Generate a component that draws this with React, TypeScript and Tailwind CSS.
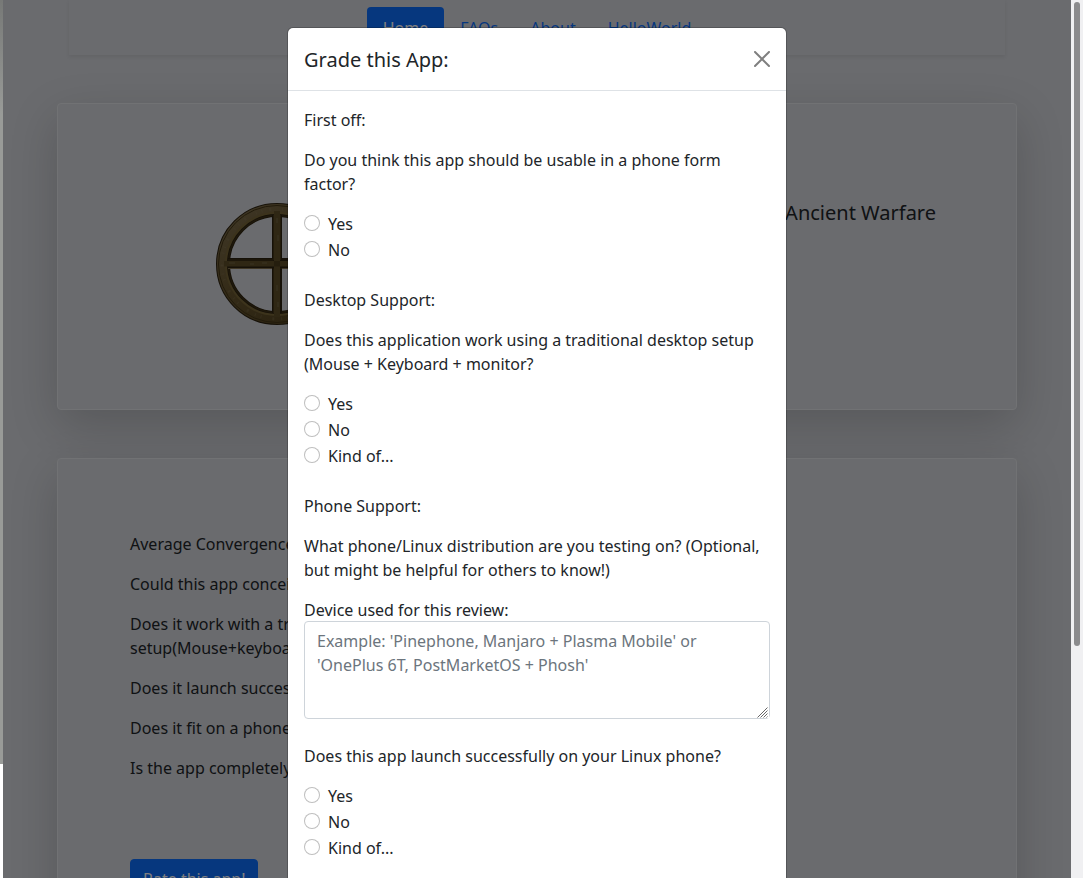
import React from 'react';

interface ChoiceGroupProps {
    name: string;
    question: string;
    options: string[];
}

function ChoiceGroup({ name, question, options }: ChoiceGroupProps) {
    return (
        <fieldset className="mb-6">
            <legend className="mb-4">{question}</legend>
            {options.map((option) => {
                const id = `${name}-${option.replace(/\W/g, '').toLowerCase()}`;
                return (
                    <div key={id} className="flex items-start gap-2 mb-0.5">
                        <input
                            id={id}
                            type="radio"
                            name={name}
                            value={option}
                            className="appearance-none shrink-0 size-4 mt-[3px] rounded-full border border-black/25 bg-white checked:border-5 checked:border-[#0d6efd]"
                        />
                        <label htmlFor={id}>{option}</label>
                    </div>
                );
            })}
        </fieldset>
    );
}

function WheelLogo() {
    return (
        <svg className="size-[122px]" viewBox="0 0 122 122" fill="none" aria-hidden="true">
            <defs>
                <linearGradient id="bronze" x1="0" y1="0" x2="0.8" y2="1">
                    <stop offset="0" stopColor="#80704e" />
                    <stop offset="0.5" stopColor="#68562f" />
                    <stop offset="1" stopColor="#544420" />
                </linearGradient>
            </defs>
            {/* rim */}
            <circle cx="61" cy="61" r="54" stroke="#2c2210" strokeWidth="14" />
            <circle cx="61" cy="61" r="55.500" stroke="url(#bronze)" strokeWidth="9" />
            <circle cx="61" cy="61" r="58.500" stroke="#443718" strokeWidth="1" />
            <circle cx="61" cy="61" r="51" stroke="#786638" strokeWidth="2" />
            <circle cx="61" cy="61" r="48.500" stroke="#3c3016" strokeWidth="1.500" />
            <circle cx="61" cy="61" r="55" stroke="#8e8060" strokeWidth="3" strokeDasharray="1 7 2 11 1 5" opacity="0.3" />
            {/* spokes */}
            <path d="M56 12h10v98H56zM12 55h98v11H12z" fill="#2c2210" />
            <path d="M58 8h6v106h-6z" fill="#5e4e28" />
            <path d="M8 58h106v5.500H8z" fill="#5e4e28" />
            <path d="M57.500 12v45H12M57.500 110V65.500M64.500 12v45M64.500 65.500H110" stroke="#443718" />
            <path d="M12 65.500h44M66 65.500h44" stroke="#80704e" />
            <path d="M13 60h6m15 1h4m8-1h5M61 15v5m1 12v6m-1 44v6m1 11v5" stroke="#8e8060" opacity="0.5" />
            <path d="M58 58h6v5.500h-6z" fill="#4a3c1c" />
        </svg>
    );
}

const navLinks = ['Home', 'FAQs', 'About', 'HelloWorld'];

export default function App() {
    return (
        <div className="flex h-screen bg-white font-['Noto_Sans',sans-serif] text-base leading-6 text-[#212529]">
            <div className="w-[3px] shrink-0">
                <div className="h-[87%] bg-linear-to-b from-[#777977] via-[#999b98] via-15% to-[#999b98]" />
            </div>

            <div className="relative flex-1 min-w-0 overflow-hidden bg-[#d4d6dc]">
                <div className="max-w-[960px] mx-auto">
                    <header className="mx-3 flex justify-center pt-[7px] pb-2 shadow-[0_2px_4px_rgba(0,0,0,0.075)]">
                        <nav className="flex">
                            {navLinks.map((link, i) => (
                                <a
                                    key={link}
                                    href="#"
                                    className={i === 0
                                        ? 'px-4 pt-[9px] pb-[7px] rounded bg-[#0d6efd] text-white'
                                        : 'px-4 pt-[9px] pb-[7px] rounded text-[#0d6efd]'}
                                >
                                    {link}
                                </a>
                            ))}
                        </nav>
                    </header>

                    <section className="mt-12 flex items-start justify-between rounded border border-[#e2e4e8] bg-[#d4d6dc] pt-[99px] pb-[84px] pl-18 pr-20 shadow-[0_16px_48px_rgba(0,0,0,0.175)]">
                        <div className="w-[294px] flex justify-center">
                            <WheelLogo />
                        </div>
                        <h1 className="text-xl leading-5">Ancient Warfare</h1>
                    </section>

                    <section className="mt-12 rounded border border-[#e2e4e8] bg-[#d4d6dc] px-18 pt-[73px] pb-18 shadow-[0_16px_48px_rgba(0,0,0,0.175)]">
                        <div className="flex flex-col gap-4">
                            <p>Average Convergence</p>
                            <p>Could this app conceivably</p>
                            <p>Does it work with a traditional<br />setup(Mouse+keyboard)</p>
                            <p>Does it launch successfully</p>
                            <p>Does it fit on a phone</p>
                            <p>Is the app completely</p>
                        </div>
                        <button className="mt-[79px] px-3 pt-[7px] pb-[5px] rounded border border-[#0d6efd] bg-[#0d6efd] text-white">
                            Rate this app!
                        </button>
                    </section>
                </div>

                {/* modal over a dimmed page */}
                <div className="absolute inset-0 overflow-y-auto bg-black/50 [scrollbar-width:none]">
                    <div
                        role="dialog"
                        aria-modal="true"
                        aria-labelledby="grade-title"
                        className="w-full max-w-[500px] mx-auto mt-[27px] mb-7 rounded-md border border-black/20 bg-white bg-clip-padding"
                    >
                        <div className="flex items-center justify-between p-4 border-b border-[#dee2e6]">
                            <h2 id="grade-title" className="pt-0.5 text-xl leading-7">Grade this App:</h2>
                            <button aria-label="Close" className="text-black/50">
                                <svg className="size-4" viewBox="0 0 16 16" fill="currentColor" aria-hidden="true">
                                    <path d="M.293.293a1 1 0 0 1 1.414 0L8 6.586 14.293.293a1 1 0 1 1 1.414 1.414L9.414 8l6.293 6.293a1 1 0 0 1-1.414 1.414L8 9.414l-6.293 6.293a1 1 0 0 1-1.414-1.414L6.586 8 .293 1.707a1 1 0 0 1 0-1.414z" />
                                </svg>
                            </button>
                        </div>

                        <form className="px-4 pt-[17px] pb-4">
                            <p className="mb-4">First off:</p>
                            <ChoiceGroup
                                name="usable"
                                question="Do you think this app should be usable in a phone form factor?"
                                options={['Yes', 'No']}
                            />

                            <p className="mb-4">Desktop Support:</p>
                            <ChoiceGroup
                                name="desktop"
                                question="Does this application work using a traditional desktop setup (Mouse + Keyboard + monitor?"
                                options={['Yes', 'No', 'Kind of...']}
                            />

                            <p className="mb-4">Phone Support:</p>
                            <p className="mb-4">
                                What phone/Linux distribution are you testing on? (Optional, but might be helpful for others to know!)
                            </p>
                            <label htmlFor="device" className="block h-[23px]">Device used for this review:</label>
                            <div className="relative mb-[25px]">
                                <textarea
                                    id="device"
                                    placeholder="Example: 'Pinephone, Manjaro + Plasma Mobile' or 'OnePlus 6T, PostMarketOS + Phosh'"
                                    className="block w-full h-[98px] px-3 pt-[7px] pb-[5px] rounded border border-[#ced4da] resize-y placeholder:text-[#6c757d] [&::-webkit-resizer]:bg-white"
                                />
                                {/* resize grip */}
                                <svg className="absolute right-0.5 bottom-px size-[11px] pointer-events-none" viewBox="0 0 11 11" fill="none" stroke="#666" aria-hidden="true">
                                    <path d="M.5 10.500l10-10M3.500 10.500l7-7M6.500 10.500l4-4M9.500 10.500l1-1" />
                                </svg>
                            </div>

                            <ChoiceGroup
                                name="launch"
                                question="Does this app launch successfully on your Linux phone?"
                                options={['Yes', 'No', 'Kind of...']}
                            />
                        </form>
                    </div>
                </div>
            </div>

            <div className="w-3 shrink-0 bg-[#f0f0f2] px-[3px] pt-0.5">
                <div className="h-[73.5%] rounded-full bg-[#8b8b8d]" />
            </div>
        </div>
    );
}
